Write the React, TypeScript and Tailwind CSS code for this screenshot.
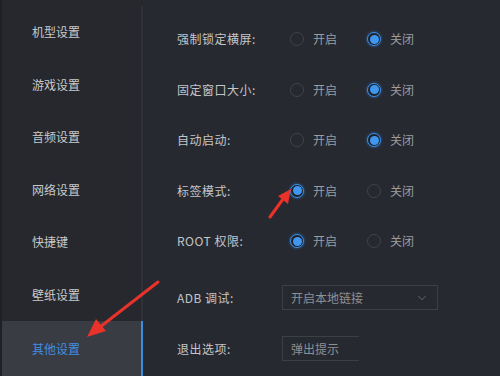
import { ChevronDown } from "lucide-react";

const menu = ["机型设置", "游戏设置", "音频设置", "网络设置", "快捷键", "壁纸设置", "其他设置"];

const radios = [
  { label: "强制锁定横屏:", on: false },
  { label: "固定窗口大小:", on: false },
  { label: "自动启动:", on: false },
  { label: "标签模式:", on: true },
  { label: "ROOT 权限:", on: true },
];

function Radio({ checked, text }: { checked: boolean; text: string }) {
  return (
    <div className="flex items-center gap-[9px]">
      {checked ? (
        <span className="flex h-[14px] w-[14px] items-center justify-center rounded-full border border-[#3b8fe8] bg-[#1e2126] shadow-[0_0_3px_#2a6fb8]">
          <span className="h-[9px] w-[9px] rounded-full bg-[#4197ef]" />
        </span>
      ) : (
        <span className="h-[14px] w-[14px] rounded-full border border-[#40434a]" />
      )}
      <span className="text-[12px] text-[#9a9ca0]">{text}</span>
    </div>
  );
}

export default function App() {
  return (
    <div
      className="relative flex h-[376px] w-[500px] overflow-hidden bg-[#272930]"
      style={{ fontFamily: '"Noto Sans CJK SC", "Noto Sans", sans-serif' }}
    >
      {/* sidebar */}
      <div className="flex w-[143px] flex-col border-l-2 border-[#1f2126] bg-[#26282e] pt-[6px]">
        {menu.map((m, i) => {
          const active = i === menu.length - 1;
          return (
            <div
              key={m}
              className={
                active
                  ? "flex flex-1 items-center border-r-2 border-[#3c8de0] bg-[#3a3c43] pl-[30px] text-[12px] text-[#3f8fe0]"
                  : "flex h-[52.5px] items-center border-r-2 border-[#30323a] pl-[30px] text-[12px] text-[#c9cacc]"
              }
            >
              {m}
            </div>
          );
        })}
      </div>

      {/* content */}
      <div className="flex flex-1 flex-col pl-[34px] pt-[14px]">
        {radios.map((r) => (
          <div key={r.label} className="flex h-[50.5px] items-center">
            <div className="w-[113px] text-[12px] tracking-[0.5px] text-[#c4c5c8]">{r.label}</div>
            <div className="flex items-center gap-[30px]">
              <Radio checked={r.on} text="开启" />
              <Radio checked={!r.on} text="关闭" />
            </div>
          </div>
        ))}
        <div className="flex h-[62px] items-center">
          <div className="w-[105px] text-[12px] tracking-[0.5px] text-[#c4c5c8]">ADB 调试:</div>
          <div className="flex h-[25px] w-[156px] items-center justify-between border border-[#3c3f46] pl-[8px] pr-[8px] text-[12px] text-[#8e9094]">
            开启本地链接
            <ChevronDown size={14} strokeWidth={1.5} className="text-[#6c6e73]" />
          </div>
        </div>
        <div className="flex h-[40px] items-center">
          <div className="w-[105px] text-[12px] tracking-[0.5px] text-[#c4c5c8]">退出选项:</div>
          <div className="flex h-[25px] w-[77px] items-center border border-r-0 border-[#3c3f46] pl-[8px] text-[12px] text-[#8e9094]">
            弹出提示
          </div>
        </div>
      </div>

      {/* red annotation arrows */}
      <svg className="pointer-events-none absolute left-0 top-0" width="500" height="376">
        <line x1="158" y1="282" x2="100" y2="327" stroke="#e8322a" strokeWidth="3" strokeLinecap="round" />
        <polygon points="87,337 96,319 106,331" fill="#e8322a" />
        <line x1="270" y1="217" x2="283" y2="199" stroke="#e8322a" strokeWidth="3" strokeLinecap="round" />
        <polygon points="291,189 278,196 288,204" fill="#e8322a" />
      </svg>
    </div>
  );
}
